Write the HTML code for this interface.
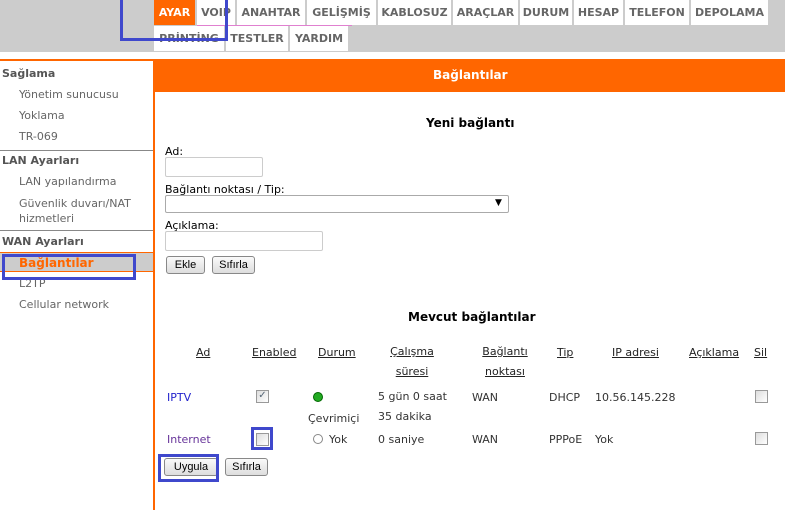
<!DOCTYPE html>
<html><head><meta charset="utf-8"><style>
*{margin:0;padding:0;box-sizing:border-box}
body{width:785px;height:510px;position:relative;overflow:hidden;background:#fff;font-family:"DejaVu Sans","Liberation Sans",sans-serif;font-size:11px;color:#333}
.a{position:absolute;white-space:nowrap}
.tab{position:absolute;height:25px;background:#fff;border-right:2px solid #ccc;font-weight:bold;font-size:11px;color:#666;text-align:center;line-height:26px}
.sh{position:absolute;left:2px;font-weight:bold;font-size:11px;color:#555}
.si{position:absolute;left:19px;font-size:11px;color:#666}
.hr{position:absolute;left:0;width:153px;height:1px;background:#888}
.btn{position:absolute;height:18px;border:1px solid #888;border-radius:3px;background:linear-gradient(#fafafa,#ddd);font-family:"Liberation Sans",sans-serif;font-size:11px;color:#000;text-align:center;line-height:16px}
.inp{position:absolute;border:1px solid #ccc;border-radius:2px;background:#fff}
.th{position:absolute;text-decoration:underline;color:#222;font-size:11px}
.cb{position:absolute;width:13px;height:13px;border:1px solid #999;background:linear-gradient(135deg,#ddd,#fff)}
.blue{position:absolute;border:3px solid #3f48cc}
</style></head><body>
<div class="a" style="left:0;top:0;width:785px;height:52px;background:#cccccc"></div>
<div class="a" style="left:215px;top:0;width:56px;height:3px;background:#f60;border-radius:0 0 8px 8px"></div>
<div class="tab" style="left:154px;width:43px;background:#ff6600;color:#fff">AYAR</div>
<div class="tab" style="left:197px;width:40px">VOIP</div>
<div class="tab" style="left:237px;width:70px">ANAHTAR</div>
<div class="tab" style="left:307px;width:71px">GELİŞMİŞ</div>
<div class="tab" style="left:378px;width:75px">KABLOSUZ</div>
<div class="tab" style="left:453px;width:67px">ARAÇLAR</div>
<div class="tab" style="left:520px;width:54px">DURUM</div>
<div class="tab" style="left:574px;width:51px">HESAP</div>
<div class="tab" style="left:625px;width:66px">TELEFON</div>
<div class="tab" style="left:691px;width:77px;border-right:none">DEPOLAMA</div>
<div class="a" style="left:197px;top:25px;width:155px;height:1px;background:#e080d0"></div>
<div class="tab" style="left:154px;top:26px;width:72px">PRİNTİNG</div>
<div class="tab" style="left:226px;top:26px;width:64px">TESTLER</div>
<div class="tab" style="left:290px;top:26px;width:58px;border-right:none">YARDIM</div>

<div class="a" style="left:0;top:59px;width:785px;height:2px;background:#f60"></div>
<div class="a" style="left:154px;top:59px;width:631px;height:33px;background:#ff6600;color:#fff;font-weight:bold;font-size:12px;line-height:33px;padding-left:279px">Bağlantılar</div>
<div class="a" style="left:153px;top:59px;width:2px;height:451px;background:#f60"></div>

<div class="sh" style="top:67px">Sağlama</div>
<div class="si" style="top:88px">Yönetim sunucusu</div>
<div class="si" style="top:109px">Yoklama</div>
<div class="si" style="top:130px">TR-069</div>
<div class="hr" style="top:150px"></div>
<div class="sh" style="top:154px">LAN Ayarları</div>
<div class="si" style="top:175px">LAN yapılandırma</div>
<div class="si" style="top:196px;line-height:15px">Güvenlik duvarı/NAT<br>hizmetleri</div>
<div class="hr" style="top:230px"></div>
<div class="sh" style="top:235px">WAN Ayarları</div>
<div class="a" style="left:0;top:252px;width:153px;height:20px;background:#ccc;border-top:1px solid #f60;border-bottom:1px solid #f60"></div>
<div class="si" style="top:256px;color:#f60;font-weight:bold;font-size:12px">Bağlantılar</div>
<div class="si" style="top:277px">L2TP</div>
<div class="si" style="top:298px">Cellular network</div>

<div class="a" style="left:426px;top:116px;font-weight:bold;font-size:12px;color:#000">Yeni bağlantı</div>
<div class="a" style="left:165px;top:145px;color:#000">Ad:</div>
<div class="inp" style="left:165px;top:157px;width:98px;height:20px"></div>
<div class="a" style="left:165px;top:183px;color:#000">Bağlantı noktası / Tip:</div>
<div class="inp" style="left:165px;top:195px;width:344px;height:18px;border-color:#aaa"></div>
<div class="a" style="left:495px;top:198px;font-size:9px;color:#000">▼</div>
<div class="a" style="left:165px;top:219px;color:#000">Açıklama:</div>
<div class="inp" style="left:165px;top:231px;width:158px;height:20px"></div>
<div class="btn" style="left:166px;top:256px;width:39px">Ekle</div>
<div class="btn" style="left:212px;top:256px;width:43px">Sıfırla</div>

<div class="a" style="left:408px;top:310px;font-weight:bold;font-size:12px;color:#000">Mevcut bağlantılar</div>
<div class="th" style="left:196px;top:346px">Ad</div>
<div class="th" style="left:252px;top:346px">Enabled</div>
<div class="th" style="left:318px;top:346px">Durum</div>
<div class="th" style="left:353px;top:342px;width:118px;text-align:center;line-height:20px">Çalışma<br>süresi</div>
<div class="th" style="left:475px;top:342px;width:60px;text-align:center;line-height:20px">Bağlantı<br>noktası</div>
<div class="th" style="left:557px;top:346px">Tip</div>
<div class="th" style="left:612px;top:346px">IP adresi</div>
<div class="th" style="left:689px;top:346px">Açıklama</div>
<div class="th" style="left:754px;top:346px">Sil</div>

<div class="a" style="left:167px;top:391px;color:#22c">IPTV</div>
<div class="cb" style="left:256px;top:390px;font-size:10px;line-height:10px;color:#567;text-align:center">✓</div>
<div class="a" style="left:313px;top:392px;width:10px;height:10px;border-radius:50%;background:#2a2;border:1px solid #060"></div>
<div class="a" style="left:308px;top:412px">Çevrimiçi</div>
<div class="a" style="left:378px;top:387px;line-height:20px">5 gün 0 saat<br>35 dakika</div>
<div class="a" style="left:472px;top:391px">WAN</div>
<div class="a" style="left:549px;top:391px">DHCP</div>
<div class="a" style="left:595px;top:391px">10.56.145.228</div>
<div class="cb" style="left:755px;top:390px"></div>

<div class="a" style="left:167px;top:433px;color:#639">Internet</div>
<div class="cb" style="left:256px;top:433px"></div>
<div class="a" style="left:313px;top:434px;width:10px;height:10px;border-radius:50%;border:1px solid #888"></div>
<div class="a" style="left:329px;top:433px">Yok</div>
<div class="a" style="left:378px;top:433px">0 saniye</div>
<div class="a" style="left:472px;top:433px">WAN</div>
<div class="a" style="left:549px;top:433px">PPPoE</div>
<div class="a" style="left:595px;top:433px">Yok</div>
<div class="cb" style="left:755px;top:432px"></div>

<div class="btn" style="left:164px;top:458px;width:54px">Uygula</div>
<div class="btn" style="left:225px;top:458px;width:43px">Sıfırla</div>

<div class="blue" style="left:120px;top:-3px;width:108px;height:44px"></div>
<div class="blue" style="left:2px;top:254px;width:134px;height:26px"></div>
<div class="blue" style="left:251px;top:427px;width:22px;height:23px"></div>
<div class="blue" style="left:158px;top:454px;width:61px;height:28px"></div>
</body></html>
